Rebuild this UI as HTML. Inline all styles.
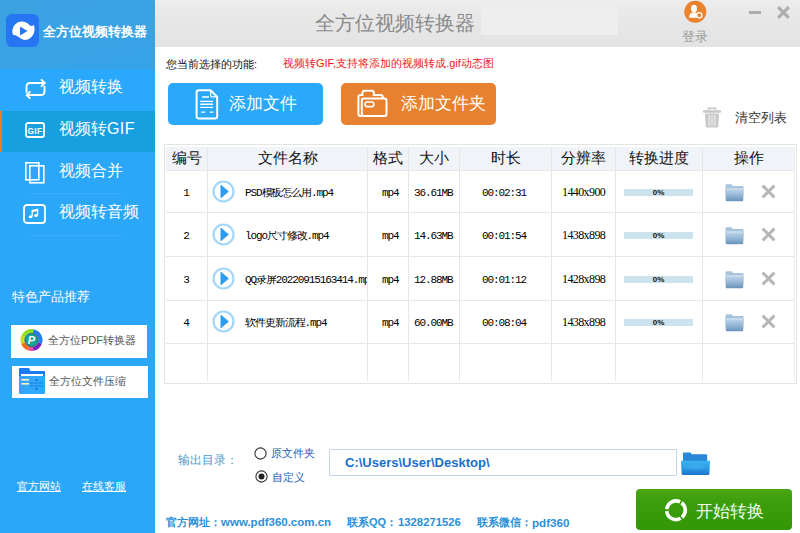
<!DOCTYPE html>
<html><head><meta charset="utf-8">
<style>
*{margin:0;padding:0;box-sizing:border-box}
html,body{width:800px;height:533px;overflow:hidden;background:#fff;font-family:"Liberation Sans",sans-serif}
.a{position:absolute;white-space:nowrap}
#side{position:absolute;left:0;top:0;width:155px;height:533px;background:#2aa7f9}
#shead{position:absolute;left:0;top:0;width:155px;height:69px;background:linear-gradient(160deg,#3ca2e2,#36a3e7)}
.mi{position:absolute;left:0;width:155px;height:42px}
.mt{position:absolute;left:59px;color:#fff;font-size:16px;line-height:16px}
#top{position:absolute;left:155px;top:0;width:645px;height:47px;background:linear-gradient(#eeeeee 0,#eaeaea 8px,#e7e7e7 20px,#e5e5e5 36px,#e3e3e3 47px)}
.hdr{position:absolute;top:147px;height:23px;background:#f0f4f9;font-size:14.5px;line-height:23px;text-align:center;color:#111}
.vl{position:absolute;top:147px;width:1px;height:234px;background:#e6e6e6}
.hl{position:absolute;left:166px;width:628px;height:1px;background:#e8e8e8}
.c{position:absolute;white-space:nowrap;font-family:"Liberation Mono",monospace;font-size:11px;letter-spacing:-1.1px;color:#000;line-height:11px}
</style></head><body>
<div id="side">
  <div id="shead"></div>
  <!-- logo -->
  <svg class="a" style="left:6px;top:14px" width="33" height="33" viewBox="0 0 33 33">
    <rect x="0" y="0" width="33" height="33" rx="6" fill="#2676f3"/>
    <path d="M6.4 18.5 C6 12 11 7.6 15.5 7.6 C19 7.6 21.5 9 24 11.8 C25.5 12.2 26.8 11.8 27.9 11 C29.2 15 28.6 20 25.4 23 C22.5 26 18 27 14.7 24.6 C12.5 23 10.5 21 7.2 21 C6.6 20.3 6.4 19.5 6.4 18.5 Z" fill="#fff"/>
    <path d="M14 12.5 L21.5 17 L14 21.5 Z" fill="#2676f3"/>
  </svg>
  <div class="a" style="left:43px;top:25px;color:#fff;font-size:12.6px;font-weight:bold;line-height:14px">全方位视频转换器</div>

  <div class="mi" style="top:69px;background:#2aa8fb"></div>
  <div class="mi" style="top:111px;height:41px;background:#16a0e0;border-left:2px solid #f07a1e"></div>
  <!-- icons -->
  <svg class="a" style="left:25px;top:78px" width="22" height="22" viewBox="0 0 22 22" fill="none" stroke="#fff" stroke-width="1.9" stroke-linecap="round" stroke-linejoin="round"><path d="M1.5 14 V8.5 Q1.5 5 5 5 H19.5"/><path d="M16.5 1.8 L19.7 5 L16.5 8.2"/><path d="M19.5 8.5 V13.5 Q19.5 17 16 17 H1.8"/><path d="M4.8 13.8 L1.6 17 L4.8 20.2"/></svg>
  <div class="mt" style="top:79px">视频转换</div>
  <svg class="a" style="left:25px;top:122px" width="20" height="16" viewBox="0 0 20 16">
    <rect x="1" y="1" width="18" height="14" rx="2" fill="none" stroke="#fff" stroke-width="1.8"/>
    <text x="10" y="11.8" font-family="Liberation Sans" font-weight="bold" font-size="8.2" fill="#fff" text-anchor="middle" letter-spacing="0.5">GIF</text>
  </svg>
  <div class="mt" style="top:121px">视频转<span style="letter-spacing:0.4px">GIF</span></div>
  <svg class="a" style="left:24px;top:161px" width="22" height="23" viewBox="0 0 22 23" fill="none" stroke="#fff" stroke-width="1.6"><rect x="1.8" y="1.8" width="13" height="17"/><rect x="5.8" y="4.8" width="14" height="17"/></svg>
  <div class="mt" style="top:163px">视频合并</div>
  <div class="a" style="left:29px;top:193px;width:94px;height:1px;background:rgba(255,255,255,0.07)"></div>
  <svg class="a" style="left:23px;top:204px" width="23" height="20" viewBox="0 0 23 20"><rect x="1" y="1" width="21" height="18" rx="3" fill="none" stroke="#fff" stroke-width="1.8"/><path d="M9.2 12.5 V6.6 L14.6 5.4 V11.3" fill="none" stroke="#fff" stroke-width="1.3"/><path d="M9.2 6.6 L14.6 5.4 V7 L9.2 8.2 Z" fill="#fff"/><ellipse cx="7.6" cy="12.8" rx="1.9" ry="1.5" fill="#fff"/><ellipse cx="13" cy="11.6" rx="1.9" ry="1.5" fill="#fff"/></svg>
  <div class="mt" style="top:204px">视频转音频</div>
  <div class="a" style="left:29px;top:235px;width:94px;height:1px;background:rgba(255,255,255,0.07)"></div>

  <div class="a" style="left:12px;top:290px;color:#fff;font-size:13px;line-height:13px">特色产品推荐</div>
  <div class="a" style="left:11px;top:325px;width:136px;height:33px;background:#fff"></div>
  <svg class="a" style="left:20px;top:328px" width="23" height="24" viewBox="0 0 23 24"><path d="M13.06 3.14 A9 9 0 0 1 19.96 15.08" stroke="#1f7ff0" stroke-width="4" fill="none"/><path d="M19.96 15.08 A9 9 0 0 1 13.06 20.86" stroke="#7a1fc0" stroke-width="4" fill="none"/><path d="M13.06 20.86 A9 9 0 0 1 8.42 20.46" stroke="#f04c9a" stroke-width="4" fill="none"/><path d="M8.42 20.46 A9 9 0 0 1 3.04 15.08" stroke="#ff6a10" stroke-width="4" fill="none"/><path d="M3.04 15.08 A9 9 0 0 1 3.34 8.20" stroke="#c8dc20" stroke-width="4" fill="none"/><path d="M3.34 8.20 A9 9 0 0 1 13.06 3.14" stroke="#8ee020" stroke-width="4" fill="none"/><circle cx="11.5" cy="12" r="6.6" fill="#17a597" stroke="#1b5e6e" stroke-width="1"/><text x="11.3" y="16.3" font-family="Liberation Sans" font-weight="bold" font-style="italic" font-size="11" fill="#fff" text-anchor="middle">P</text></svg>
  <div class="a" style="left:48px;top:334px;color:#555;font-size:11px;line-height:13px">全方位PDF转换器</div>
  <div class="a" style="left:12px;top:366px;width:136px;height:32px;background:#fff"></div>
  <svg class="a" style="left:19px;top:368px" width="26" height="26" viewBox="0 0 26 26"><path d="M0 1 Q0 0 1 0 H10 L11.5 3 H25 Q26 3 26 4 V9 H0 Z" fill="#1a7cf0"/><rect x="0" y="5" width="26" height="21" rx="1" fill="#2fa7fb"/><rect x="0" y="4" width="26" height="4" fill="#1a7cf0"/><rect x="2" y="6" width="22" height="2" fill="#fff"/><rect x="2.5" y="11" width="7.5" height="1.6" fill="#fff6c0"/><rect x="2.5" y="15" width="7.5" height="1.6" fill="#fff6c0"/><circle cx="17.5" cy="12" r="1" fill="#1a5fc0"/><path d="M11 15 H24 M11 18 H24" stroke="#2078d8" stroke-width="0.9"/><circle cx="17.5" cy="21" r="1" fill="#1a5fc0"/></svg>
  <div class="a" style="left:49px;top:375px;color:#555;font-size:11px;line-height:13px">全方位文件压缩</div>

  <div class="a" style="left:17px;top:480px;color:#fff;font-size:11px;line-height:12px;text-decoration:underline">官方网站</div>
  <div class="a" style="left:82px;top:480px;color:#fff;font-size:11px;line-height:12px;text-decoration:underline">在线客服</div>
</div>

<div id="top"></div>
<div class="a" style="left:481px;top:7px;width:137px;height:28px;background:#eeeeee"></div>
<div class="a" style="left:315px;top:12px;color:#8a8a8a;font-size:20.3px;line-height:22px">全方位视频转换器</div>
<svg class="a" style="left:684px;top:0px" width="23" height="24" viewBox="0 0 23 24"><circle cx="11.3" cy="11.8" r="11" fill="#ea822e"/><ellipse cx="10" cy="8.6" rx="3" ry="3.9" fill="#fff"/><path d="M5 17.8 Q5.2 13.6 8.6 12.6 H11.6 Q12.6 13.2 13 14 V17.8 Z" fill="#fff"/><circle cx="15.3" cy="15.3" r="2.6" fill="#ea822e" stroke="#fff" stroke-width="1.3"/></svg>
<div class="a" style="left:682px;top:29.5px;color:#9a9a9a;font-size:12.6px;line-height:14px">登录</div>
<div class="a" style="left:749px;top:11px;width:12px;height:3px;background:#ababab"></div>
<svg class="a" style="left:777px;top:6px" width="13" height="13" viewBox="0 0 13 13"><path d="M1.2 1.2 L11.8 11.8 M11.8 1.2 L1.2 11.8" stroke="#adadad" stroke-width="3.1"/></svg>

<div class="a" style="left:166px;top:58px;color:#111;font-size:11px;line-height:12px">您当前选择的功能:</div>
<div class="a" style="left:283px;top:57px;color:#f01818;font-size:11px;line-height:12px">视频转GIF,支持将添加的视频转成.gif动态图</div>

<!-- buttons -->
<div class="a" style="left:168px;top:83px;width:155px;height:42px;background:#2aa8fa;border-radius:5px"></div>
<svg class="a" style="left:195px;top:89px" width="24" height="31" viewBox="0 0 24 31" fill="none" stroke="#fff"><path d="M1.6 3.2 Q1.6 1.2 3.6 1.2 H15.6 L22.2 7.8 V27.4 Q22.2 29.4 20.2 29.4 H3.6 Q1.6 29.4 1.6 27.4 Z" stroke-width="2"/><path d="M15.6 1.5 V6.8 Q15.6 7.8 16.6 7.8 H22" stroke-width="1.3"/><path d="M7 8 H14 M5.2 12.4 H18 M5.2 15.3 H18 M5.2 18.4 H18 M6.1 23.1 H10.2 M14.7 23.1 H18.4" stroke-width="1.4"/></svg>
<div class="a" style="left:229px;top:95px;color:#fff;font-size:17px;line-height:18px">添加文件</div>
<div class="a" style="left:341px;top:83px;width:155px;height:42px;background:#e8812f;border-radius:5px"></div>
<svg class="a" style="left:356px;top:88px" width="33" height="31" viewBox="0 0 33 31" fill="none" stroke="#fff" stroke-width="2"><path d="M2.4 25.9 V9 Q2.4 6.9 4.5 6.9 H6.5 V4.6 Q6.5 2.8 8.3 2.8 H16 Q17.8 2.8 17.8 4.6 V6.9 H24.6 Q26.8 6.9 26.8 9 V10.6"/><path d="M2.4 25.9 Q2.4 27.9 4.4 27.9 H6"/><rect x="5.8" y="10.6" width="24.7" height="17.3" rx="2"/><rect x="9.1" y="14" width="8.7" height="4.6" rx="2" stroke-width="1.6"/></svg>
<div class="a" style="left:401px;top:95px;color:#fff;font-size:17px;line-height:18px">添加文件夹</div>

<svg class="a" style="left:703px;top:107px" width="18" height="21" viewBox="0 0 18 21"><path d="M5.5 3.5 V1.3 H12.5 V3.5" stroke="#c6c6c6" stroke-width="1.4" fill="none"/><rect x="0" y="3.2" width="18" height="2.6" rx="1" fill="#c6c6c6"/><path d="M2 6.5 H16 L15.3 19.6 Q15.2 20.6 14.2 20.6 H3.8 Q2.8 20.6 2.7 19.6 Z" fill="#c9c9c9"/><path d="M6.2 8 V18.8 M9 8 V18.8 M11.8 8 V18.8" stroke="#efefef" stroke-width="1.1"/></svg>
<div class="a" style="left:735px;top:111px;color:#333;font-size:12.5px;line-height:14px">清空列表</div>

<!-- table -->
<div class="a" style="left:164px;top:144px;width:633px;height:240px;border:1px solid #e4e4e4;background:#fff"></div>
<div class="hdr" style="left:166px;width:41px">编号</div>
<div class="hdr" style="left:208px;width:159px">文件名称</div>
<div class="hdr" style="left:368px;width:40px">格式</div>
<div class="hdr" style="left:409px;width:50px">大小</div>
<div class="hdr" style="left:460px;width:91px">时长</div>
<div class="hdr" style="left:552px;width:63px">分辨率</div>
<div class="hdr" style="left:616px;width:86px">转换进度</div>
<div class="hdr" style="left:703px;width:91px">操作</div>
<div class="vl" style="left:207px"></div>
<div class="vl" style="left:367px"></div>
<div class="vl" style="left:408px"></div>
<div class="vl" style="left:459px"></div>
<div class="vl" style="left:551px"></div>
<div class="vl" style="left:615px"></div>
<div class="vl" style="left:702px"></div>
<div class="vl" style="left:794px;background:#ececec"></div>
<div class="hl" style="top:170px"></div>
<div class="hl" style="top:212px"></div>
<div class="hl" style="top:256px"></div>
<div class="hl" style="top:300px"></div>
<div class="hl" style="top:343px"></div>

<div class="c" style="left:182px;top:188px;width:8px;text-align:center">1</div>
<svg class="a" style="left:212px;top:180px" width="23" height="23" viewBox="0 0 23 23"><circle cx="11.5" cy="11.5" r="10" fill="#fff" stroke="#a3d6fb" stroke-width="2.2"/><path d="M9 5.3 L16.3 11.5 L9 17.7 Z" fill="#2c9cef" stroke="#2c9cef" stroke-width="1" stroke-linejoin="round"/></svg>
<div class="c" style="left:245px;top:188px;width:122px;overflow:hidden">PSD模板怎么用.mp4</div>
<div class="c" style="left:382px;top:188px">mp4</div>
<div class="c" style="left:414px;top:188px">36.61MB</div>
<div class="c" style="left:482px;top:188px">00:02:31</div>
<div class="c" style="left:562px;top:187px;font-family:'Liberation Serif',serif;font-size:12px;letter-spacing:-0.6px">1440x900</div>
<div class="a" style="left:624px;top:189px;width:69px;height:7px;background:#cce3ed;font-size:8px;font-weight:bold;line-height:7px;text-align:center;color:#111">0%</div>
<svg class="a" style="left:725px;top:184px" width="19" height="18" viewBox="0 0 19 18"><defs><linearGradient id="fg1" x1="0" y1="0" x2="0" y2="1"><stop offset="0" stop-color="#c2d7ea"/><stop offset="0.5" stop-color="#98b9d8"/><stop offset="1" stop-color="#6893bb"/></linearGradient></defs><path d="M0.5 1.5 Q0.5 0.3 1.7 0.3 H6.5 L8 2 H17.5 Q18.5 2 18.5 3 V5 H0.5 Z" fill="#a9c4dd"/><path d="M0 4.5 H19 L18.2 16.2 Q18.1 17.2 17 17.2 H2 Q0.9 17.2 0.8 16.2 Z" fill="url(#fg1)"/><path d="M1.5 5 H17.5" stroke="#dbe8f3" stroke-width="0.8"/></svg>
<svg class="a" style="left:761px;top:184px" width="15" height="15" viewBox="0 0 15 15"><path d="M1.6 1.6 L13.4 13.4 M13.4 1.6 L1.6 13.4" stroke="#b6b6b6" stroke-width="2.9"/></svg>
<div class="c" style="left:182px;top:231px;width:8px;text-align:center">2</div>
<svg class="a" style="left:212px;top:223px" width="23" height="23" viewBox="0 0 23 23"><circle cx="11.5" cy="11.5" r="10" fill="#fff" stroke="#a3d6fb" stroke-width="2.2"/><path d="M9 5.3 L16.3 11.5 L9 17.7 Z" fill="#2c9cef" stroke="#2c9cef" stroke-width="1" stroke-linejoin="round"/></svg>
<div class="c" style="left:245px;top:231px;width:122px;overflow:hidden">logo尺寸修改.mp4</div>
<div class="c" style="left:382px;top:231px">mp4</div>
<div class="c" style="left:414px;top:231px">14.63MB</div>
<div class="c" style="left:482px;top:231px">00:01:54</div>
<div class="c" style="left:562px;top:230px;font-family:'Liberation Serif',serif;font-size:12px;letter-spacing:-0.6px">1438x898</div>
<div class="a" style="left:624px;top:232px;width:69px;height:7px;background:#cce3ed;font-size:8px;font-weight:bold;line-height:7px;text-align:center;color:#111">0%</div>
<svg class="a" style="left:725px;top:227px" width="19" height="18" viewBox="0 0 19 18"><defs><linearGradient id="fg2" x1="0" y1="0" x2="0" y2="1"><stop offset="0" stop-color="#c2d7ea"/><stop offset="0.5" stop-color="#98b9d8"/><stop offset="1" stop-color="#6893bb"/></linearGradient></defs><path d="M0.5 1.5 Q0.5 0.3 1.7 0.3 H6.5 L8 2 H17.5 Q18.5 2 18.5 3 V5 H0.5 Z" fill="#a9c4dd"/><path d="M0 4.5 H19 L18.2 16.2 Q18.1 17.2 17 17.2 H2 Q0.9 17.2 0.8 16.2 Z" fill="url(#fg2)"/><path d="M1.5 5 H17.5" stroke="#dbe8f3" stroke-width="0.8"/></svg>
<svg class="a" style="left:761px;top:227px" width="15" height="15" viewBox="0 0 15 15"><path d="M1.6 1.6 L13.4 13.4 M13.4 1.6 L1.6 13.4" stroke="#b6b6b6" stroke-width="2.9"/></svg>
<div class="c" style="left:182px;top:275px;width:8px;text-align:center">3</div>
<svg class="a" style="left:212px;top:267px" width="23" height="23" viewBox="0 0 23 23"><circle cx="11.5" cy="11.5" r="10" fill="#fff" stroke="#a3d6fb" stroke-width="2.2"/><path d="M9 5.3 L16.3 11.5 L9 17.7 Z" fill="#2c9cef" stroke="#2c9cef" stroke-width="1" stroke-linejoin="round"/></svg>
<div class="c" style="left:245px;top:275px;width:122px;overflow:hidden">QQ录屏20220915163414.mp4</div>
<div class="c" style="left:382px;top:275px">mp4</div>
<div class="c" style="left:414px;top:275px">12.88MB</div>
<div class="c" style="left:482px;top:275px">00:01:12</div>
<div class="c" style="left:562px;top:274px;font-family:'Liberation Serif',serif;font-size:12px;letter-spacing:-0.6px">1428x898</div>
<div class="a" style="left:624px;top:276px;width:69px;height:7px;background:#cce3ed;font-size:8px;font-weight:bold;line-height:7px;text-align:center;color:#111">0%</div>
<svg class="a" style="left:725px;top:271px" width="19" height="18" viewBox="0 0 19 18"><defs><linearGradient id="fg3" x1="0" y1="0" x2="0" y2="1"><stop offset="0" stop-color="#c2d7ea"/><stop offset="0.5" stop-color="#98b9d8"/><stop offset="1" stop-color="#6893bb"/></linearGradient></defs><path d="M0.5 1.5 Q0.5 0.3 1.7 0.3 H6.5 L8 2 H17.5 Q18.5 2 18.5 3 V5 H0.5 Z" fill="#a9c4dd"/><path d="M0 4.5 H19 L18.2 16.2 Q18.1 17.2 17 17.2 H2 Q0.9 17.2 0.8 16.2 Z" fill="url(#fg3)"/><path d="M1.5 5 H17.5" stroke="#dbe8f3" stroke-width="0.8"/></svg>
<svg class="a" style="left:761px;top:271px" width="15" height="15" viewBox="0 0 15 15"><path d="M1.6 1.6 L13.4 13.4 M13.4 1.6 L1.6 13.4" stroke="#b6b6b6" stroke-width="2.9"/></svg>
<div class="c" style="left:182px;top:318px;width:8px;text-align:center">4</div>
<svg class="a" style="left:212px;top:310px" width="23" height="23" viewBox="0 0 23 23"><circle cx="11.5" cy="11.5" r="10" fill="#fff" stroke="#a3d6fb" stroke-width="2.2"/><path d="M9 5.3 L16.3 11.5 L9 17.7 Z" fill="#2c9cef" stroke="#2c9cef" stroke-width="1" stroke-linejoin="round"/></svg>
<div class="c" style="left:245px;top:318px;width:122px;overflow:hidden">软件更新流程.mp4</div>
<div class="c" style="left:382px;top:318px">mp4</div>
<div class="c" style="left:414px;top:318px">60.00MB</div>
<div class="c" style="left:482px;top:318px">00:08:04</div>
<div class="c" style="left:562px;top:317px;font-family:'Liberation Serif',serif;font-size:12px;letter-spacing:-0.6px">1438x898</div>
<div class="a" style="left:624px;top:319px;width:69px;height:7px;background:#cce3ed;font-size:8px;font-weight:bold;line-height:7px;text-align:center;color:#111">0%</div>
<svg class="a" style="left:725px;top:314px" width="19" height="18" viewBox="0 0 19 18"><defs><linearGradient id="fg4" x1="0" y1="0" x2="0" y2="1"><stop offset="0" stop-color="#c2d7ea"/><stop offset="0.5" stop-color="#98b9d8"/><stop offset="1" stop-color="#6893bb"/></linearGradient></defs><path d="M0.5 1.5 Q0.5 0.3 1.7 0.3 H6.5 L8 2 H17.5 Q18.5 2 18.5 3 V5 H0.5 Z" fill="#a9c4dd"/><path d="M0 4.5 H19 L18.2 16.2 Q18.1 17.2 17 17.2 H2 Q0.9 17.2 0.8 16.2 Z" fill="url(#fg4)"/><path d="M1.5 5 H17.5" stroke="#dbe8f3" stroke-width="0.8"/></svg>
<svg class="a" style="left:761px;top:314px" width="15" height="15" viewBox="0 0 15 15"><path d="M1.6 1.6 L13.4 13.4 M13.4 1.6 L1.6 13.4" stroke="#b6b6b6" stroke-width="2.9"/></svg>

<!-- bottom -->
<div class="a" style="left:178px;top:454px;color:#4b9ac9;font-size:12px;line-height:13px">输出目录：</div>
<svg class="a" style="left:254px;top:447px" width="14" height="14" viewBox="0 0 14 14"><circle cx="6.5" cy="6.5" r="5.6" fill="#fff" stroke="#333" stroke-width="1.1"/></svg>
<div class="a" style="left:271px;top:447px;color:#1d5fc0;font-size:11px;line-height:13px">原文件夹</div>
<svg class="a" style="left:255px;top:470px" width="14" height="14" viewBox="0 0 14 14"><circle cx="6.5" cy="6.5" r="5.6" fill="#fff" stroke="#333" stroke-width="1.1"/><circle cx="6.5" cy="6.5" r="3" fill="#222"/></svg>
<div class="a" style="left:272px;top:470.5px;color:#1d5fc0;font-size:11px;line-height:13px">自定义</div>
<div class="a" style="left:329px;top:449px;width:348px;height:27px;border:1px solid #c2d6e8;border-radius:1px;background:#fff"></div>
<div class="a" style="left:345px;top:456px;color:#1a6fc9;font-size:13px;font-weight:bold;line-height:14px">C:\Users\User\Desktop\</div>
<svg class="a" style="left:680px;top:452px" width="31" height="24" viewBox="0 0 31 24"><defs><linearGradient id="bf" x1="0" y1="0" x2="0" y2="1"><stop offset="0" stop-color="#3cb2f0"/><stop offset="0.55" stop-color="#2a9ae4"/><stop offset="1" stop-color="#1a72cc"/></linearGradient></defs><path d="M3 1.5 Q3 0.6 4 0.6 H10.5 L11.8 2.2 H26.2 Q27.2 2.2 27.2 3.2 V10 H3 Z" fill="#2a86d8"/><path d="M0.9 8.8 H30.1 L29.3 22.2 Q29.2 23 28.2 23 H2.8 Q1.8 23 1.7 22.2 Z" fill="url(#bf)"/><ellipse cx="15.5" cy="15" rx="9" ry="2.5" fill="#5cc4f4" opacity="0.25"/></svg>
<div class="a" style="left:636px;top:489px;width:156px;height:41px;border-radius:4px;background:linear-gradient(#4aa614 0%,#3a9d0a 35%,#339806 100%)"></div>
<svg class="a" style="left:665px;top:499px" width="23" height="23" viewBox="0 0 23 23" fill="none" stroke="#fff" stroke-width="3.6"><path d="M1.75 10.28 A9.3 9.3 0 0 1 15.08 2.89"/><path d="M16.47 3.73 A9.3 9.3 0 0 1 16.98 18.37"/><path d="M15.65 19.30 A9.3 9.3 0 0 1 1.74 12.06"/></svg>
<div class="a" style="left:696px;top:503px;color:#f2fff0;font-size:17px;line-height:18px">开始转换</div>
<div class="a" style="left:166px;top:516px;color:#2a8fd9;font-size:11px;font-weight:bold;line-height:13px">官方网址：</div>
<div class="a" style="left:221px;top:516px;color:#2a8fd9;font-size:11.5px;font-weight:bold;line-height:13px">www.pdf360.com.cn</div>
<div class="a" style="left:347px;top:516px;color:#2a8fd9;font-size:11px;font-weight:bold;line-height:13px">联系QQ：</div>
<div class="a" style="left:398px;top:516px;color:#2a8fd9;font-size:11.3px;font-weight:bold;line-height:13px">1328271526</div>
<div class="a" style="left:477px;top:516px;color:#2a8fd9;font-size:11px;font-weight:bold;line-height:13px">联系微信：</div>
<div class="a" style="left:532px;top:516px;color:#2a8fd9;font-size:11.6px;font-weight:bold;line-height:13px">pdf360</div>
</body></html>
